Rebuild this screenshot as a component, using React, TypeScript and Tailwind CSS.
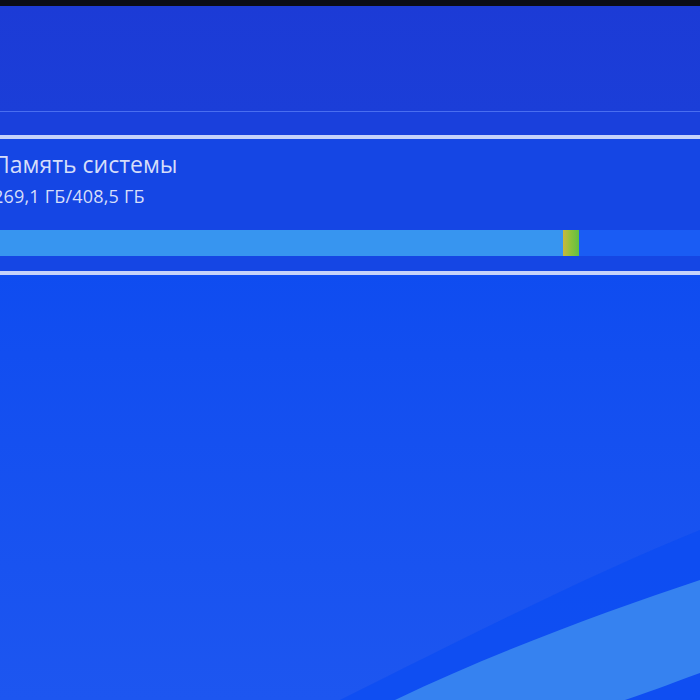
export default function App() {
  return (
    <div
      className="relative w-[700px] h-[700px] overflow-hidden bg-gradient-to-b from-[#0445f0] to-[#1d56f0]"
      style={{ fontFamily: '"Open Sans", "Noto Sans", sans-serif' }}
    >
      {/* bottom-right wave */}
      <svg
        className="absolute inset-0 pointer-events-none"
        width="700"
        height="700"
        viewBox="0 0 700 700"
      >
        <path d="M700 530 C 600 570, 480 630, 340 700 L 700 700 Z" fill="#0a4cf2" opacity="0.7" />
        <path d="M700 580 C 610 610, 500 650, 395 700 L 625 700 C 655 690, 680 680, 700 673 Z" fill="#3682f0" />
      </svg>

      <div className="relative flex flex-col">
        <div className="h-[6px] bg-[#0b0d18]" />
        <div className="h-[105px] bg-gradient-to-b from-[#1c3bd6] to-[#1b3ed8]" />
        <div className="h-px bg-[#4a6ef0]" />
        <div className="h-[23px] bg-[#1a40dc]" />
        <div className="h-[4px] bg-[#c6d2fa]" />

        <div className="flex flex-col bg-[#1546e4]">
          <div className="pt-[11px] ml-[-7px] text-[#d6defa]">
            <div className="text-[23px] leading-[28px]">Память системы</div>
            <div className="text-[18px] leading-[22px] mt-[7px] tracking-[0.2px]">269,1 ГБ/408,5 ГБ</div>
          </div>

          <div className="mt-[23px] h-[26px] flex bg-[#1a5cf4]">
            <div className="h-full w-[563px] bg-[#3795f0]" />
            <div className="h-full w-[16px] bg-gradient-to-r from-[#c9b63c] via-[#8cc23a] to-[#5fbf44]" />
          </div>

          <div className="h-[15px]" />
        </div>

        <div className="h-[4px] bg-[#c6d2fa]" />
      </div>
    </div>
  );
}
